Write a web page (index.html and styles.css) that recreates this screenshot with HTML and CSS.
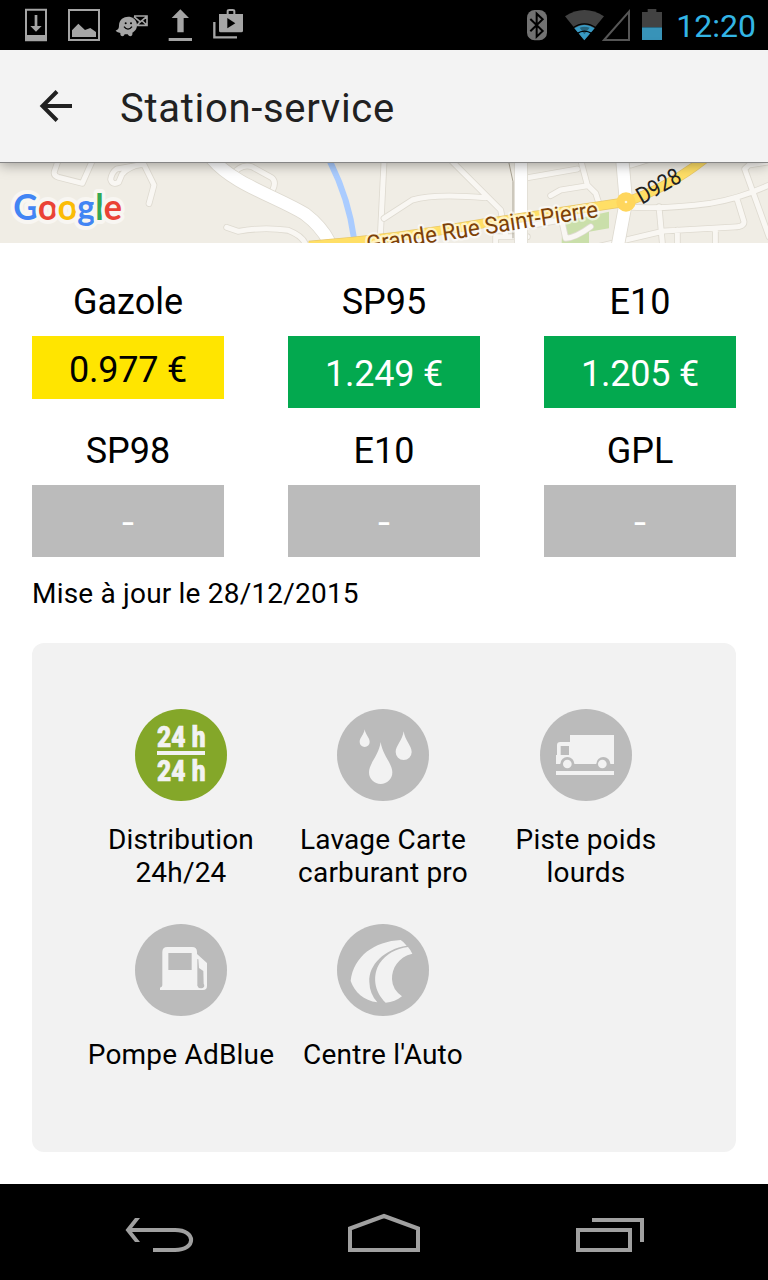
FILE: index.html
```html
<!DOCTYPE html>
<html lang="fr">
<head>
  <meta charset="UTF-8">
  <title>Station-service</title>
  <link rel="stylesheet" href="styles.css">
</head>
<body>

<div class="statusbar">
  <svg class="notifications" width="260" height="50" viewBox="0 0 780 150">
    <!-- download -->
    <path d="M78 29h60v92h-60z" fill="none" stroke="#a5a5a5" stroke-width="6"/>
    <path d="M76 105h64v18h-64zM104 45h8v33h13l-17 17-17-17h13z" fill="#a5a5a5"/>
    <!-- picture -->
    <path d="M207 30h90v90h-90z" fill="none" stroke="#a5a5a5" stroke-width="6"/>
    <path d="M216 111V91l19-20 20 19 16-6 17 12v15z" fill="#a5a5a5"/>
    <!-- waze -->
    <path d="M347 91c8 0 10-7 10-15 2-33 51-34 54-2 0 14-7 20-14 24 3 9-8 16-14 5h-9c-3 10-15 6-13-4-7-1-13-4-14-8z" fill="#a5a5a5"/>
    <path d="M402 48h39v28h-30M402 50l19 16 19-16M412 75l8-9M440 75l-13-12" fill="none" stroke="#a5a5a5" stroke-width="5"/>
    <path d="M372 80q12 15 24 0" fill="none" stroke="#000" stroke-width="4"/>
    <circle cx="377" cy="70" r="3"/>
    <circle cx="393" cy="70" r="3"/>
    <!-- upload -->
    <path d="M541 28l26 26h-16v43h-19v-43h-17zM506 114h70v9h-70z" fill="#a5a5a5"/>
    <!-- play store -->
    <path d="M643 66v46h68" fill="none" stroke="#a5a5a5" stroke-width="7"/>
    <path d="M683 42v-8q0-4 5-4h10q5 0 5 4v8" fill="none" stroke="#a5a5a5" stroke-width="6"/>
    <path d="M657 42h72v50q0 5-5 5h-62q-5 0-5-5z" fill="#a5a5a5"/>
    <path d="M682 54v31l24-15z"/>
  </svg>
  <svg class="system" width="156" height="50" viewBox="0 0 468 150">
    <!-- bluetooth -->
    <rect x="51" y="30" width="60" height="91" rx="23" fill="#727272"/>
    <path d="M61 57l37 36-18 17V41l18 17-37 36" fill="none" stroke="#000" stroke-width="6"/>
    <!-- wifi -->
    <path d="M223 121L165 49q58-38 117 0z" fill="#424242"/>
    <path d="M223 121l-30-36q30-22 61 0z" fill="#389ac4"/>
    <path d="M209 83q14-6 30 0l-16 20z" fill="#28647c"/>
    <path d="M188 84q35-25 71 0M201 101q22-15 45 0" fill="none" stroke="#000" stroke-width="4"/>
    <!-- signal -->
    <path d="M282 120L357 35v85z" fill="none" stroke="#565656" stroke-width="6"/>
    <!-- battery -->
    <path d="M396 36h17v-9h26v9h17v46h-60z" fill="#424242"/>
    <path d="M396 82h60v38h-60z" fill="#3893b8"/>
  </svg>
  <span class="clock">12:20</span>
</div>

<header class="appbar">
  <svg class="back" width="34" height="34" viewBox="0 0 34 34">
    <path d="M33 17H4M18 2.500L3.500 17l14.500 14.500" fill="none" stroke="#212121" stroke-width="4"/>
  </svg>
  <h1>Station-service</h1>
</header>

<svg class="map" width="768" height="80" viewBox="0 24 2304 240">
  <rect y="21" width="2304" height="243" fill="#f0ede5"/>

  <!-- left half, small streets -->
  <g class="street-edge">
    <path id="s1" d="M175 15L163 50Q160 62 176 67L247 85L278 15M430 28L350 42Q335 52 332 73Q337 92 356 82L366 58Q380 38 430 25L462 90L447 146M680 217L715 229Q790 215 865 226Q905 242 915 264M695 60Q725 25 755 35L815 68Q830 80 818 105M1152 20L1140 264"/>
  </g>
  <use href="#s1" class="street"/>
  <path d="M985 10Q1045 125 1062 250" fill="none" stroke="#aaccff" stroke-width="18"/>
  <path d="M635 10C700 88 830 125 915 177Q965 215 988 262" class="road-edge"/>
  <path d="M635 10C700 88 830 125 915 177Q965 215 988 262" class="road"/>

  <!-- right half -->
  <g transform="translate(1152)">
    <path d="M535 200L675 170V220L615 230V264H533z" fill="#cadfaa"/>
    <g class="street-edge">
      <path id="s2" d="M0 190L85 135Q150 115 305 128M200 15L350 165L365 240M430 68L580 42M590 15L610 90L635 115L648 155M610 92L530 105L500 122M720 155Q830 165 980 145Q1070 130 1160 88M1160 20L1095 30L1082 42L1155 245M1060 135L1080 200Q1080 215 1050 216L840 228L620 280M825 155L835 264M880 225V264M994 225V264M535 205L545 250Q575 248 620 215M335 264V245H430M440 212L530 195M740 30L790 15"/>
    </g>
    <use href="#s2" class="street"/>
    <path d="M374 20L387 80V250" fill="none" stroke="#a9a394" stroke-width="3"/>
    <path d="M411 15V270M715 15L726 140L700 280" class="road-edge"/>
    <path d="M411 15V270M715 15L726 140L700 280" class="road"/>
    <path d="M-225 272Q50 250 300 205L726 141Q860 95 970 5" fill="none" stroke="#e7c66a" stroke-width="29"/>
    <path d="M-225 272Q50 250 300 205L726 141Q860 95 970 5" fill="none" stroke="#ffdf66" stroke-width="25"/>
    <circle cx="726" cy="141" r="29" fill="#ffd65c"/>
    <circle cx="726" cy="141" r="4" fill="#fff6d8"/>
  </g>

  <text class="road-name" transform="translate(1103 292) rotate(-8.700)" textLength="702" lengthAdjust="spacingAndGlyphs">Grande Rue Saint-Pierre</text>
  <text class="road-number" transform="translate(1926 149) rotate(-30)" textLength="142" lengthAdjust="spacingAndGlyphs">D928</text>
  <text class="google" x="40" y="194" textLength="326" lengthAdjust="spacingAndGlyphs"><tspan fill="#4285f4">G</tspan><tspan fill="#ea4335">o</tspan><tspan fill="#fbbc05">o</tspan><tspan fill="#4285f4">g</tspan><tspan fill="#34a853">l</tspan><tspan fill="#ea4335">e</tspan></text>
</svg>

<main>
  <div class="prices">
    <div class="fuel">
      <div class="name">Gazole</div>
      <div class="price yellow">0.977 €</div>
    </div>
    <div class="fuel">
      <div class="name">SP95</div>
      <div class="price green">1.249 €</div>
    </div>
    <div class="fuel">
      <div class="name">E10</div>
      <div class="price green">1.205 €</div>
    </div>
    <div class="fuel">
      <div class="name">SP98</div>
      <div class="price"><span class="none">-</span></div>
    </div>
    <div class="fuel">
      <div class="name">E10</div>
      <div class="price"><span class="none">-</span></div>
    </div>
    <div class="fuel">
      <div class="name">GPL</div>
      <div class="price"><span class="none">-</span></div>
    </div>
  </div>

  <p class="updated">Mise à jour le 28/12/2015</p>

  <div class="services">
    <div class="service">
      <svg width="92" height="92" viewBox="0 0 276 276">
        <circle cx="138" cy="138" r="138" fill="#84a729"/>
        <text class="hours" x="66" y="113" textLength="146" lengthAdjust="spacingAndGlyphs">24 h</text>
        <path d="M66 126h144v12H66z" fill="#f2f2f2"/>
        <text class="hours" x="66" y="217" textLength="146" lengthAdjust="spacingAndGlyphs">24 h</text>
      </svg>
      <span>Distribution 24h/24</span>
    </div>
    <div class="service">
      <svg width="92" height="92" viewBox="0 0 276 276">
        <circle cx="138" cy="138" r="138" fill="#bbb"/>
        <g fill="#f2f2f2">
          <path d="M83 61C85 77 98 86 98 99A15 15 0 0 1 68 99C68 86 81 77 83 61z"/>
          <path d="M131 99C136 138 166 163 166 190A35 35 0 0 1 96 190C96 163 126 138 131 99z"/>
          <path d="M200 67C203 93 224 110 224 129A24 24 0 0 1 176 129C176 110 197 93 200 67z"/>
        </g>
      </svg>
      <span>Lavage Carte carburant pro</span>
    </div>
    <div class="service">
      <svg width="92" height="92" viewBox="0 0 276 276">
        <circle cx="138" cy="138" r="138" fill="#bbb"/>
        <path d="M90 78H222V165H48V138H51V109Q51 99 61 99H90z" fill="#f2f2f2"/>
        <path d="M62 111h25v27H62z" fill="#bbb"/>
        <circle cx="82" cy="165" r="21" fill="#bbb"/>
        <circle cx="190" cy="165" r="21" fill="#bbb"/>
        <circle cx="82" cy="165" r="13" fill="#f2f2f2"/>
        <circle cx="187" cy="165" r="13" fill="#f2f2f2"/>
        <path d="M48 186h174v12H48z" fill="#f2f2f2"/>
      </svg>
      <span>Piste poids lourds</span>
    </div>
    <div class="service">
      <svg width="92" height="92" viewBox="0 0 276 276">
        <circle cx="138" cy="138" r="138" fill="#bbb"/>
        <path d="M82 84Q82 69 97 69H171Q186 69 186 84V90L216 117V185Q216 198 204 198H75V191Q82 190 82 184z" fill="#f2f2f2"/>
        <path d="M100 87h70v51h-70z" fill="#bbb"/>
        <path d="M187 105V185Q191 196 203 192Q211 187 206 179L205 141L192 132L190 106z" fill="#bbb"/>
      </svg>
      <span>Pompe AdBlue</span>
    </div>
    <div class="service">
      <svg width="92" height="92" viewBox="0 0 276 276">
        <circle cx="138" cy="138" r="138" fill="#bbb"/>
        <path d="M191 48Q201 54 209 65C143 75 94 122 97 174Q98 210 121 235C80 230 53 204 41 171C50 96 113 52 191 48z" fill="#f2f2f2"/>
        <path d="M213 69Q221 78 226 89C184 99 164 133 165 166Q166 197 195 217Q174 234 146 236C110 202 106 153 128 118Q157 76 213 69z" fill="#f2f2f2"/>
      </svg>
      <span>Centre l'Auto</span>
    </div>
  </div>
</main>

<nav class="navbar">
  <svg width="768" height="96" viewBox="0 0 768 96" fill="none" stroke="#a0a0a0" stroke-width="4">
    <path d="M130 46H175C196.500 46 196.500 66 175 66H153"/>
    <path d="M140 34h-5l-9.500 12L135 58h5l-9.500-12z" fill="#a0a0a0" stroke="none"/>
    <path d="M350 66V44.500L384 32L418 44.500V66z"/>
    <path d="M578 46h52v20h-52zM592 36h50v22"/>
  </svg>
</nav>

</body>
</html>
```

FILE: styles.css
```css
* {
  box-sizing: border-box;
}
body {
  margin: 0;
  height: 1280px;
  display: flex;
  flex-direction: column;
  font-family: Roboto, sans-serif;
  background-color: #fff;
  color: #000;
}
svg {
  display: block;
}

/* android status bar */
.statusbar {
  display: flex;
  align-items: center;
  height: 50px;
  padding-right: 12px;
  background-color: #000;
}
.system {
  margin-left: auto;
}
.clock {
  width: 90px;
  margin-top: 1px;
  text-align: right;
  font-size: 32px;
  color: #33b5e5;
}

.appbar {
  position: relative;
  display: flex;
  align-items: center;
  height: 113px;
  padding-left: 39px;
  background-color: #f3f3f3;
  border-bottom: 1px solid #858585;
  box-shadow: 0 2px 12px rgba(0, 0, 0, 0.35);
}
.back {
  margin-top: -1px;
}
.appbar h1 {
  margin: 4px 0 0 47px;
  font-size: 40px;
  font-weight: 400;
  letter-spacing: 0.7px;
  color: #212121;
}

/* map strip */
.street-edge, .street {
  fill: none;
  stroke-linecap: round;
  stroke-linejoin: round;
}
.street-edge {
  stroke: #dedad0;
  stroke-width: 20;
}
.street {
  stroke: #f9f7f3;
  stroke-width: 15;
}
.road-edge, .road {
  fill: none;
}
.road-edge {
  stroke: #dedad0;
  stroke-width: 42;
}
.road {
  stroke: #fff;
  stroke-width: 37;
}
.road-name, .road-number, .google {
  paint-order: stroke;
  stroke-linejoin: round;
}
.road-name {
  font-size: 70px;
  fill: #7d4108;
  stroke: rgba(255, 255, 255, 0.6);
  stroke-width: 14px;
}
.road-number {
  font-size: 70px;
  fill: #222;
}
.google {
  font-family: Lato, sans-serif;
  font-weight: 700;
  font-size: 110px;
  stroke: #f8f6f2;
  stroke-width: 24px;
}

main {
  flex: 1;
  padding: 38px 32px 0;
}
.prices {
  display: grid;
  grid-template-columns: repeat(3, 192px);
  column-gap: 64px;
  row-gap: 22px;
  align-items: start;
  text-align: center;
  font-size: 36px;
  line-height: 42px;
}
.name {
  margin-bottom: 13px;
}
.price {
  height: 72px;
  line-height: 76px;
  letter-spacing: -0.2px;
  background-color: #bbb;
  color: #fff;
}
.green {
  background-color: #03a94f;
}
.yellow {
  height: 63px;
  line-height: 68px;
  background-color: #ffe500;
  color: #000;
}
.none {
  display: inline-block;
  transform: scaleX(1.2);
}
.updated {
  margin: 20px 0 33px;
  font-size: 28px;
  line-height: 33px;
  letter-spacing: 0.2px;
}

.services {
  display: grid;
  grid-template-columns: 202px 202px 204px;
  grid-template-rows: 215px 215px;
  height: 509px;
  padding: 66px 48px 0;
  border-radius: 12px;
  background-color: #f2f2f2;
}
.service {
  display: flex;
  flex-direction: column;
  align-items: center;
  text-align: center;
  font-size: 28px;
  line-height: 33px;
  letter-spacing: 0.2px;
}
.service span {
  margin-top: 22px;
}
.hours {
  font-weight: 900;
  font-size: 88px;
  fill: #f2f2f2;
  stroke: #f2f2f2;
  stroke-width: 2px;
}

.navbar {
  height: 96px;
  background-color: #000;
}
```
